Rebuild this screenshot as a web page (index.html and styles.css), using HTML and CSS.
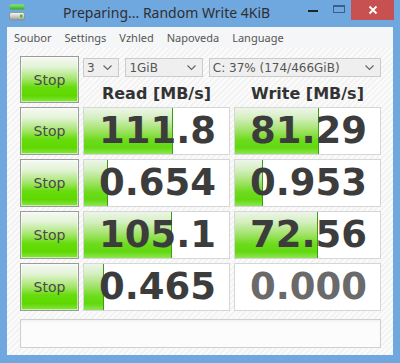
FILE: index.html
```html
<!DOCTYPE html>
<html lang="cs">
<head>
  <meta charset="UTF-8">
  <title>CrystalDiskMark</title>
  <link rel="stylesheet" href="styles.css">
</head>
<body>

<div class="titlebar">
  <svg class="appicon" width="16" height="17" viewBox="0 0 16 17">
    <defs>
      <linearGradient id="gtop" x1="0" y1="0" x2="0" y2="1">
        <stop offset="0" stop-color="#8ee86a"/>
        <stop offset="1" stop-color="#2fae1e"/>
      </linearGradient>
      <linearGradient id="gdrv" x1="0" y1="0" x2="0" y2="1">
        <stop offset="0" stop-color="#ffffff"/>
        <stop offset="1" stop-color="#9a9a9a"/>
      </linearGradient>
    </defs>
    <rect x="0.5" y="0.5" width="15" height="5" rx="1.5" fill="url(#gtop)"/>
    <rect x="0.5" y="8.5" width="15" height="7.5" rx="2" fill="url(#gdrv)" stroke="#8a8a8a" stroke-width="0.8"/>
    <rect x="11" y="10.5" width="2.5" height="3" fill="#3fc22a"/>
  </svg>
  <span class="title">Preparing... Random Write 4KiB</span>
  <div class="winbtns">
    <span class="wbtn min"><svg width="26" height="20"><rect x="8" y="10" width="10" height="2" fill="#222"/></svg></span>
    <span class="wbtn max"><svg width="25" height="20"><rect x="7.5" y="5.5" width="11" height="7" fill="none" stroke="#3d5f86"/><rect x="7" y="5" width="12" height="2" fill="#3d5f86"/></svg></span>
    <span class="wbtn close"><svg width="43" height="20"><path d="M18.5 6.5 L25.5 13.5 M25.5 6.5 L18.5 13.5" stroke="#fff" stroke-width="1.8"/></svg></span>
  </div>
</div>

<div class="menubar">
  <span>Soubor</span>
  <span>Settings</span>
  <span>Vzhled</span>
  <span>Napoveda</span>
  <span>Language</span>
</div>

<div class="client">
  <div class="grid">
    <button class="stop">Stop</button>
    <div class="setup">
      <div class="combos">
        <div class="combo c-num">3<svg class="chev" width="9" height="6"><polyline points="0.5,0.5 4.5,4.5 8.5,0.5" fill="none" stroke="#666" stroke-width="1.2"/></svg></div>
        <div class="combo c-size">1GiB<svg class="chev" width="9" height="6"><polyline points="0.5,0.5 4.5,4.5 8.5,0.5" fill="none" stroke="#666" stroke-width="1.2"/></svg></div>
        <div class="combo c-drive">C: 37% (174/466GiB)<svg class="chev" width="9" height="6"><polyline points="0.5,0.5 4.5,4.5 8.5,0.5" fill="none" stroke="#666" stroke-width="1.2"/></svg></div>
      </div>
      <div class="heads">
        <div>Read [MB/s]</div>
        <div>Write [MB/s]</div>
      </div>
    </div>

    <button class="stop">Stop</button>
    <div class="cell"><div class="bar" style="width:88px"></div><span class="val">111.8</span></div>
    <div class="cell"><div class="bar" style="width:83px"></div><span class="val">81.29</span></div>

    <button class="stop">Stop</button>
    <div class="cell"><div class="bar" style="width:23px"></div><span class="val">0.654</span></div>
    <div class="cell"><div class="bar" style="width:27px"></div><span class="val">0.953</span></div>

    <button class="stop">Stop</button>
    <div class="cell"><div class="bar" style="width:87px"></div><span class="val">105.1</span></div>
    <div class="cell"><div class="bar" style="width:82px"></div><span class="val">72.56</span></div>

    <button class="stop">Stop</button>
    <div class="cell"><div class="bar" style="width:19px"></div><span class="val">0.465</span></div>
    <div class="cell"><span class="val idle">0.000</span></div>
  </div>
  <div class="status"></div>
</div>

</body>
</html>
```

FILE: styles.css
```css
body { margin: 0; width: 400px; height: 363px; overflow: hidden; background: #6fa7df; font-family: "Noto Sans", sans-serif; }

.titlebar { height: 27px; display: flex; align-items: flex-start; }
.appicon { margin: 4px 0 0 9px; }
.title { margin: 3px 0 0 38px; font-size: 14px; line-height: 20px; color: #2f2f2f; white-space: nowrap; }
.winbtns { margin-left: auto; margin-right: 6px; display: flex; }
.wbtn { display: block; height: 20px; }
.wbtn svg { display: block; }
.close { background: #c75151; }

.menubar { height: 21px; margin: 0 7px; background: #f5f6f7; display: flex; gap: 13px; padding-left: 7px; font-size: 11px; line-height: 21px; color: #555; }

.client { height: 299px; margin: 0 7px; padding: 8px 0 0 13px; background: repeating-linear-gradient(-45deg, #fbfbfb 0, #fbfbfb 2px, #f3f3f3 2px, #f3f3f3 4px); }

.grid { display: grid; grid-template-columns: 59px 147px 147px; grid-template-rows: 47px repeat(4, 48px); gap: 4px; }

.stop { margin: 0; padding: 0; border: 1px solid #9b9b9b; font-family: "DejaVu Sans", sans-serif; font-size: 14px; color: #4a4a4a; box-shadow: inset 0 0 0 1px rgba(255,255,255,0.55);
  background: linear-gradient(to bottom, #f6f9f4 0%, #e2f3d6 22%, #a8e670 48%, #66dc0c 68%, #5fd800 86%, #86e545 100%); }

.setup { grid-column: 2 / 4; }
.combos { display: flex; gap: 6px; margin-top: 2px; }
.combo { height: 17px; border: 1px solid #cbcbcb; background: #efefef; display: flex; align-items: center; padding: 0 6px 0 3px; font-family: "DejaVu Sans", sans-serif; font-size: 12px; color: #555; }
.combo .chev { margin-left: auto; }
.c-num { width: 26px; }
.c-size { width: 68px; }
.c-drive { width: 165px; }

.heads { display: grid; grid-template-columns: 147px 147px; gap: 4px; margin-top: 7px; font-family: "DejaVu Sans", sans-serif; font-weight: bold; font-size: 16px; line-height: 19px; color: #333; text-align: center; }

.cell { position: relative; border: 1px solid #d6d6d6; background: #fff; overflow: hidden; text-align: right; }
.bar { position: absolute; left: 0; top: 0; bottom: 0; border-right: 1px solid #3f9a17;
  background: linear-gradient(to bottom, #eef5ea 0%, #d3efbf 22%, #a2e36a 48%, #6ddb1c 70%, #62d810 86%, #8ee652 100%); }
.val { position: relative; display: block; padding-right: 13px; font-family: "DejaVu Sans", sans-serif; font-weight: bold; font-size: 37px; line-height: 46px; color: #3c3c3c; }
.val.idle { color: #6a6a6a; }

.status { width: 359px; height: 27px; margin-top: 8px; border: 1px solid #cfcfcf; background: #fcfcfc; box-shadow: inset 0 2px 2px rgba(0,0,0,0.04); }
```
